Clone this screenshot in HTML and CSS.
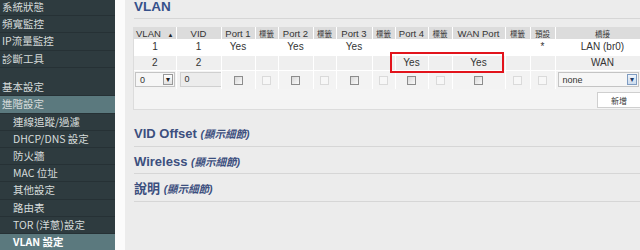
FILE: index.html
```html
<!DOCTYPE html>
<html lang="zh-Hant">
<head>
  <meta charset="UTF-8" />
  <title>VLAN 設定</title>
  <link rel="stylesheet" href="styles.css">
</head>
<body>
  <div class="page">
    <nav class="sidebar">
      <a class="nav-item first">系統狀態</a>
      <a class="nav-item">頻寬監控</a>
      <a class="nav-item">IP流量監控</a>
      <a class="nav-item">診斷工具</a>
      <div class="nav-gap"></div>
      <a class="nav-item">基本設定</a>
      <a class="nav-item open">進階設定</a>
      <a class="nav-item sub">連線追蹤/過濾</a>
      <a class="nav-item sub">DHCP/DNS 設定</a>
      <a class="nav-item sub">防火牆</a>
      <a class="nav-item sub">MAC 位址</a>
      <a class="nav-item sub">其他設定</a>
      <a class="nav-item sub">路由表</a>
      <a class="nav-item sub">TOR (洋蔥)設定</a>
      <a class="nav-item sub active">VLAN 設定</a>
    </nav>
    <div class="divider"></div>
    <main class="content">
      <h2 class="page-title">VLAN</h2>

      <div class="vlan-box">
        <table class="vlan-table">
          <colgroup>
            <col style="width:42px"><col style="width:45px">
            <col style="width:34px"><col style="width:23px">
            <col style="width:35px"><col style="width:23px">
            <col style="width:36px"><col style="width:23px">
            <col style="width:33px"><col style="width:24px">
            <col style="width:53px"><col style="width:25px">
            <col style="width:25px"><col style="width:95px">
          </colgroup>
          <thead>
            <tr>
              <th>VLAN <span class="sort">▲</span></th>
              <th>VID</th>
              <th>Port 1</th><th class="tag">標籤</th>
              <th>Port 2</th><th class="tag">標籤</th>
              <th>Port 3</th><th class="tag">標籤</th>
              <th>Port 4</th><th class="tag">標籤</th>
              <th>WAN Port</th><th class="tag">標籤</th>
              <th class="tag">預設</th>
              <th class="tag">橋接</th>
            </tr>
          </thead>
          <tbody>
            <tr class="row-a">
              <td>1</td><td>1</td>
              <td>Yes</td><td></td>
              <td>Yes</td><td></td>
              <td>Yes</td><td></td>
              <td></td><td></td>
              <td></td><td></td>
              <td>*</td>
              <td>LAN (br0)</td>
            </tr>
            <tr class="row-b">
              <td>2</td><td>2</td>
              <td></td><td></td>
              <td></td><td></td>
              <td></td><td></td>
              <td>Yes</td><td></td>
              <td>Yes</td><td></td>
              <td></td>
              <td>WAN</td>
            </tr>
            <tr class="row-edit">
              <td class="left"><div class="select narrow"><span>0</span><span class="arrow">▾</span></div></td>
              <td class="left"><div class="text-input">0</div></td>
              <td><span class="cb"></span></td><td><span class="cb off"></span></td>
              <td><span class="cb"></span></td><td><span class="cb off"></span></td>
              <td><span class="cb"></span></td><td><span class="cb off"></span></td>
              <td><span class="cb"></span></td><td><span class="cb off"></span></td>
              <td><span class="cb"></span></td><td><span class="cb off"></span></td>
              <td><span class="cb off"></span></td>
              <td class="left"><div class="select wide"><span>none</span><span class="arrow blue">▾</span></div></td>
            </tr>
          </tbody>
        </table>
        <div class="add-row"><button class="add-btn">新增</button></div>
        <div class="mark"></div>
      </div>

      <div class="sections">
        <h3 class="section">VID Offset <span class="detail">(顯示細節)</span></h3>
        <h3 class="section">Wireless <span class="detail">(顯示細節)</span></h3>
        <h3 class="section">說明 <span class="detail">(顯示細節)</span></h3>
      </div>
    </main>
  </div>
</body>
</html>
```

FILE: styles.css
```css
* { box-sizing: border-box; }
html, body {
  margin: 0;
  padding: 0;
  width: 640px;
  height: 250px;
  overflow: hidden;
  background: #ececec;
  font-family: "Liberation Sans", Arial, "Noto Sans CJK TC", sans-serif;
}
.page {
  display: flex;
  height: 250px;
}

/* sidebar */
.sidebar {
  width: 115px;
  flex-shrink: 0;
  background: #2e3b3f;
  display: flex;
  flex-direction: column;
}
.nav-item {
  display: block;
  flex-shrink: 0;
  height: 17.2px;
  line-height: 16px;
  padding-left: 2px;
  font-size: 10.5px;
  font-family: "Noto Sans CJK TC", sans-serif;
  color: #d6dbdb;
  border-bottom: 1px solid #263135;
  white-space: nowrap;
}
.nav-item.first { margin-top: -1px; }
.nav-item.sub { padding-left: 13px; }
.nav-item.open { background: #5b797e; }
.nav-item.active {
  background: #5b797e;
  color: #fff;
  font-weight: bold;
}
.nav-gap { height: 11.5px; flex-shrink: 0; }

.divider {
  width: 10px;
  flex-shrink: 0;
  background: #fbfbfb;
}

/* main */
.content {
  flex: 1;
  min-width: 0;
  padding-left: 8px;
  overflow: hidden;
}
.page-title {
  margin: 0 0 0 1px;
  height: 19px;
  line-height: 14px;
  font-size: 13.5px;
  font-weight: bold;
  color: #35508a;
  border-bottom: 1px solid #d6d6d6;
}

.vlan-box {
  position: relative;
  width: 530px;
  margin-top: 8px;
  background: #f4f4f4;
  border-left: 1px solid #dcdcdc;
  border-bottom: 1px solid #dcdcdc;
}
.vlan-table {
  border-collapse: collapse;
  table-layout: fixed;
  width: 498px;
  font-size: 9px;
  color: #333;
}
.vlan-table th,
.vlan-table td {
  padding: 0;
  text-align: center;
  border-right: 1px solid #fff;
  white-space: nowrap;
  overflow: hidden;
}
.vlan-table th {
  height: 12px;
  background: #dcdcdc;
  font-weight: normal;
  font-size: 9.5px;
}
.vlan-table th.tag {
  font-size: 7.5px;
  font-family: "Noto Sans CJK TC", sans-serif;
}
.sort { font-size: 6px; margin-left: 4px; color: #222; }
.row-a td {
  height: 16px;
  background: #fff;
  font-size: 10px;
  border-right: none;
}
.row-b td {
  height: 15px;
  background: #efefef;
  font-size: 10px;
  border-top: 1px solid #fff;
}
.row-edit td {
  height: 19px;
  background: #f3f3f3;
  border-top: 1px solid #fff;
}
.vlan-table td.left { text-align: left; padding-left: 1px; }

.select {
  display: flex;
  align-items: center;
  justify-content: space-between;
  height: 15px;
  padding: 0 1px 0 4px;
  background: #f6f6f6;
  border: 1px solid #c4c4c4;
  font-size: 9px;
}
.select.narrow { width: 40px; }
.select.wide { width: 81px; margin-left: 1px; }
.arrow {
  width: 10px;
  height: 11px;
  line-height: 10px;
  font-size: 8px;
  text-align: center;
  color: #222;
  background: linear-gradient(#fff, #e2e2e2);
  border: 1px solid #999;
}
.arrow.blue {
  background: linear-gradient(#eef4fb, #cddcee);
  border-color: #7f9cc2;
  color: #1d3a66;
}
.text-input {
  width: 45px;
  height: 15px;
  margin-left: 2px;
  padding-left: 4px;
  line-height: 13px;
  font-size: 9px;
  background: #ececec;
  border: 1px solid #d0d0d0;
}
.cb {
  display: inline-block;
  width: 9px;
  height: 9px;
  vertical-align: middle;
  border: 1px solid #8c8c8c;
  background: linear-gradient(135deg, #d8d8d8, #fafafa);
}
.cb.off {
  border-color: #dadada;
  background: #f7f7f7;
}

.add-row {
  display: flex;
  justify-content: flex-end;
  height: 20px;
  padding: 3px 0 0 0;
  width: 507px;
}
.add-btn {
  width: 44px;
  height: 16px;
  padding: 0;
  font-size: 8px;
  font-family: "Noto Sans CJK TC", sans-serif;
  color: #333;
  background: #fff;
  border: 1px solid #cfcfcf;
}

/* red annotation frame over the WAN row */
.mark {
  position: absolute;
  left: 256px;
  top: 25px;
  width: 114px;
  height: 21px;
  border: 2px solid #e2141c;
}

.sections { margin-top: 9px; }
.section {
  margin: 0 0 0 1px;
  padding-top: 7px;
  height: 27.5px;
  line-height: 16px;
  font-size: 13px;
  font-weight: bold;
  color: #3c4f7e;
  border-bottom: 1px solid #d6d6d6;
}
.detail {
  font-size: 10.5px;
  font-style: italic;
  font-family: "Liberation Sans", "Noto Sans CJK TC", sans-serif;
}
```
